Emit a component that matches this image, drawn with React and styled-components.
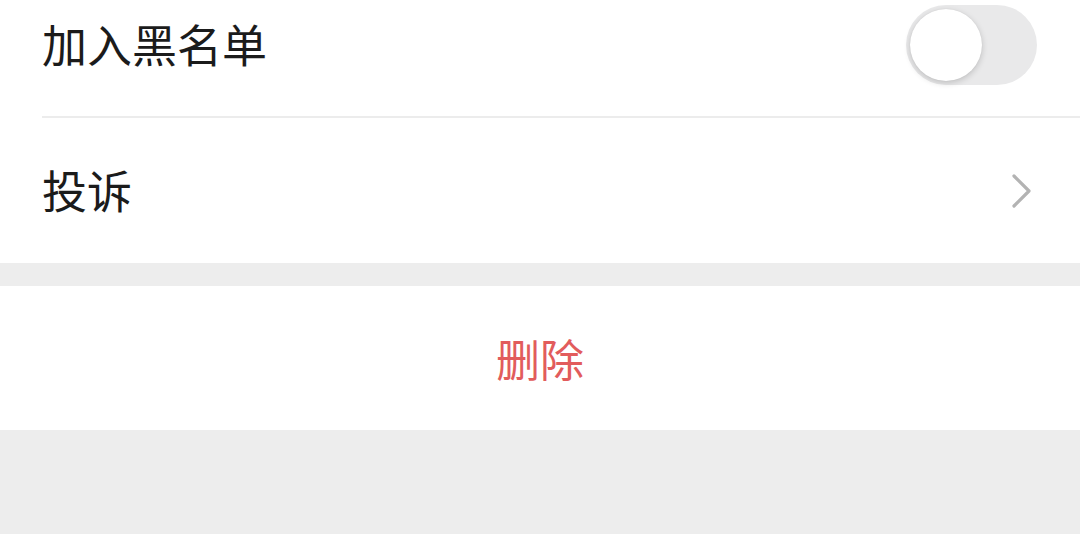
import React, { useState } from "react";
import styled, { createGlobalStyle } from "styled-components";

const Global = createGlobalStyle`
  html, body { margin: 0; padding: 0; background: #ededed; overflow: hidden; }
  body { font-family: "Noto Sans CJK SC", "Noto Sans", sans-serif; }
`;

const Page = styled.div`
  width: 1080px;
  height: 534px;
  background: #ededed;
  overflow: hidden;
`;

const Group = styled.div`
  background: #ffffff;
  margin-top: ${(p) => p.$mt || 0}px;
`;

const Row = styled.div`
  height: ${(p) => p.$h || 145}px;
  margin-left: 42px;
  padding-right: 42px;
  display: flex;
  align-items: center;
  justify-content: space-between;
  border-bottom: ${(p) => (p.$divider ? "2px solid #ececec" : "none")};
  box-sizing: border-box;
`;

const Label = styled.span`
  font-size: 45px;
  color: #1b1b1b;
  line-height: 1;
  margin-top: -2px;
`;

const Track = styled.button`
  width: 131px;
  height: 80px;
  border-radius: 40px;
  border: none;
  padding: 0;
  margin-right: 1px;
  background: ${(p) => (p.$on ? "#07c160" : "#e9e9ea")};
  position: relative;
  cursor: pointer;
`;

const Knob = styled.span`
  position: absolute;
  top: 4px;
  left: ${(p) => (p.$on ? 55 : 4)}px;
  width: 72px;
  height: 72px;
  border-radius: 50%;
  background: #fff;
  box-shadow: 0 2px 6px rgba(0, 0, 0, 0.18), 0 0 1px rgba(0, 0, 0, 0.1);
`;

const Chevron = styled.svg`
  width: 22px;
  height: 36px;
  margin-right: 5px;
`;

const DeleteRow = styled.div`
  height: 144px;
  display: flex;
  align-items: center;
  justify-content: center;
  font-size: 44px;
  color: #e25c5c;
  line-height: 1;
`;

export default function App() {
  const [on, setOn] = useState(false);
  return (
    <Page>
      <Global />
      <Group $mt={-27}>
        <Row $divider $h={145}>
          <Label>加入黑名单</Label>
          <Track $on={on} onClick={() => setOn(!on)}>
            <Knob $on={on} />
          </Track>
        </Row>
        <Row $h={145}>
          <Label>投诉</Label>
          <Chevron viewBox="0 0 22 36">
            <path d="M3 3 L18 18 L3 33" fill="none" stroke="#b3b3b3" strokeWidth="3.2" strokeLinecap="round" strokeLinejoin="round" />
          </Chevron>
        </Row>
      </Group>
      <Group $mt={23}>
        <DeleteRow>删除</DeleteRow>
      </Group>
    </Page>
  );
}
